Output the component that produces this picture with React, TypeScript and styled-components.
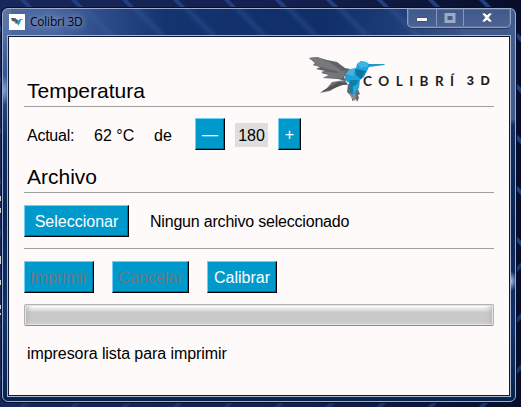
import React from "react";
import styled, { createGlobalStyle, css } from "styled-components";

const GlobalStyle = createGlobalStyle`
  * { box-sizing: border-box; }
  body { margin: 0; overflow: hidden; background: #0a1437; }
`;

const Desktop = styled.div`
  position: relative;
  width: 521px;
  height: 407px;
  padding: 8px 5px 5px 2px;
  background:
    repeating-linear-gradient(45deg, transparent 0 17px, #213f80 18px 21px, transparent 22px 36.06px) 0 0 / 521px 260px no-repeat,
    repeating-linear-gradient(135deg, transparent 0 9px, #1a3269 10px 13px, transparent 14px 36.06px) 0 260px / 521px 147px no-repeat,
    linear-gradient(90deg, #18275c, #131f4e 60%, #070d2a);
`;

const IconLabels = styled.svg`
  position: absolute;
  left: 0;
  top: 190px;
`;

const Window = styled.div`
  display: flex;
  flex-direction: column;
  width: 514px;
  height: 394px;
  padding: 0 5px 5px 4px;
  border: 1px solid #9fadc7;
  border-radius: 6px;
  box-shadow: 0 0 0 1px #060e2a;
  background:
    radial-gradient(ellipse 6px 15px at 1px 81px, #87a4d9, transparent) 0 0 / 8px 100% no-repeat,
    linear-gradient(180deg, #5a74a8 0 20px, #40609b 45px, transparent 130px) 0 0 / 8px 100% no-repeat,
    radial-gradient(ellipse 6px 10px at 4px 272px, #aac2f1, transparent) 100% 0 / 8px 100% no-repeat,
    linear-gradient(180deg, #435a8c 0 110px, transparent 116px) 100% 0 / 7px 100% no-repeat,
    linear-gradient(90deg, #4c68a0 0%, #4a669f 10%, #304f8c 18%, #143470 32%, #102e68 62%, #1b3c77 76%, #42598c 93%) 0 0 / 100% 28px no-repeat,
    linear-gradient(180deg, #173c7b, #0a2453 55%, #10316b 80%, #09234f);
`;

const TitleBar = styled.header`
  display: flex;
  flex: 0 0 27px;
  align-items: flex-start;
  margin: 0 -5px 0 -4px;
  padding: 0 4px 0 6px;
  background: repeating-linear-gradient(45deg, transparent 0, rgba(61, 105, 174, 0.26) 5px, transparent 10px 36.06px);
`;

const AppIcon = styled.svg`
  flex: none;
  width: 16px;
  height: 16px;
  margin-top: 5px;
  background: #fff;
`;

const Title = styled.span`
  margin: 4px auto 0 0;
  padding: 0 6px 0 5px;
  font: 12px/18px "Open Sans", sans-serif;
  letter-spacing: -0.23px;
  color: #02050d;
  text-shadow: 0 0 7px #9fb0d2, 0 0 9px #8fa3ca;
`;

const Controls = styled.div`
  display: flex;
  width: 104px;
  height: 19px;
  border: 1px solid #8d9ebf;
  border-top: 0;
  border-radius: 0 0 5px 5px;
  box-shadow: inset 0 0 0 1px #5b719e, 0 1px 0 #26365e;
  background: linear-gradient(#40588b, #4a6394);
`;

const Control = styled.span<{ $width: number }>`
  display: flex;
  align-items: center;
  justify-content: center;
  width: ${(p) => p.$width}px;
  height: 17px;
  & + & { border-left: 1px solid #8797b7; }
`;

const Client = styled.main`
  flex: 1;
  width: 502px;
  margin-left: 1px;
  padding: 0 15px;
  border: 1px solid #0b1831;
  outline: 1px solid #aab8ce;
  background: #fefaf9;
  font-family: "Liberation Sans", Arial, sans-serif;
  font-size: 16px;
  line-height: 20px;
  color: #000;
`;

const Section = styled.section<{ $height: number }>`
  display: flex;
  align-items: flex-end;
  justify-content: space-between;
  height: ${(p) => p.$height}px;
  border-bottom: 1px solid #a0a0a0;
`;

const Heading = styled.h2`
  margin: 0 0 2px 3px;
  font-size: 21px;
  font-weight: 400;
  line-height: 26px;
`;

const Brand = styled.div`
  display: flex;
  height: 50px;
  margin-right: 4px;
`;

const Bird = styled.svg`
  position: relative;
  z-index: 1;
  width: 76px;
  height: 48px;
`;

const Wordmark = styled.div`
  display: flex;
  justify-content: space-between;
  width: 127px;
  margin: 15px 0 0 -22px;
  font: 700 13.5px/20px Lato, sans-serif;
  color: #1d1d20;
`;

const Numeral = styled.b`
  font: 700 13px/20px "Liberation Sans", Arial, sans-serif;
`;

const Row = styled.div<{ $top: number }>`
  display: flex;
  align-items: center;
  height: 32px;
  margin-top: ${(p) => p.$top}px;
`;

const Label = styled.span<{ $width?: number; $left?: number; $spacing?: number; $drop?: number }>`
  margin-left: ${(p) => p.$left ?? 0}px;
  padding-top: ${(p) => p.$drop ?? 2}px;
  width: ${(p) => (p.$width ? `${p.$width}px` : "auto")};
  letter-spacing: ${(p) => p.$spacing ?? 0}px;
  white-space: nowrap;
`;

const Button = styled.button<{ $width: number; $gap?: number }>`
  flex: none;
  width: ${(p) => p.$width}px;
  height: 32px;
  margin: 0 ${(p) => p.$gap ?? 0}px 0 0;
  padding: 1px 0 0;
  border: 1px solid #000;
  border-top-color: #71cdf5;
  border-left-color: #71cdf5;
  box-shadow: inset -1px -1px 0 #006d93;
  background: #0099cc;
  color: #fff;
  font: 16px/20px "Liberation Sans", Arial, sans-serif;
  ${(p) => p.disabled && css`color: #6d7880;`}
`;

const Target = styled.output`
  width: 33px;
  height: 24px;
  margin: 2px 10px 0 0;
  background: #dedede;
  line-height: 25px;
  text-align: center;
`;

const Progress = styled.div`
  height: 22px;
  margin-top: 11px;
  border: 1px solid #b2b2b2;
  border-bottom-color: #8c8c8c;
  border-radius: 2px;
  box-shadow: inset 0 0 0 1px #e4e4e4, inset 8px 0 6px -6px #b4b4b4, inset -8px 0 6px -6px #b4b4b4;
  background: linear-gradient(#fff 0 1px, #ececec 3px, #d8d8d8 6px, #c9c9c9 7px, #cacaca 17px, #d8d8d8);
`;

function HummingbirdShapes() {
  return (
    <>
      <path d="M0 2 L8 1 18 4 28 6 36 12 41 13 35 21 37 25 29 23 14 22 20 19 12 17 16 15 7 13 11 11 4 9 6 7Z" fill="#606265" />
      <path d="M0 2 8 1 22 7 35 17 27 15 4 9 7 7Z" fill="#77797b" />
      <path d="M12 15 28 17 37 14 34 22 14 22 20 19Z" fill="#747679" />
      <path d="M36 24 23 26 18 32 11 37 21 35 31 29 39 29Z" fill="#707277" />
      <path d="M29 26 12 36 23 33 39 27Z" fill="#505258" />
      <path d="M39 28 38 36 43 41 43 45 47 43 48 46 50 42 49 39 51 38 48 31Z" fill="#65686d" />
      <path d="M40 37 47 38 46 45 43 43Z" fill="#8a8c91" />
      <path d="M36 18 41 13 47 12 48 8 52 5 57 6 60 8 75 8 76 9 60 11 57 17 55 21 51 24 50 32 44 40 40 33 40 27 36 24Z" fill="#20a1db" />
      <path d="M46 13 57 15 52 23 47 19Z" fill="#08779d" />
      <path d="M41 24 50 24 45 32 43 39 40 33Z" fill="#147fa4" />
      <path d="M44 30 50 29 44 40Z" fill="#2ca6d5" />
      <path d="M48 8 52 5 57 6 60 10 52 12Z" fill="#39b5e7" />
      <path d="M37 18 41 13 46 13 44 20Z" fill="#4ab1d9" />
      <path d="M60 8.2 75 8.4 59 10Z" fill="#2e91ba" />
    </>
  );
}

export default function App() {
  return (
    <>
      <GlobalStyle />
      <Desktop>
        <IconLabels width="2" height="130" viewBox="0 0 2 130" aria-hidden="true">
          <path d="M0 6h1v5H0zM0 18h1v5H0zM0 66h1v8H0zM0 90h1v5H0zM0 115h1v4H0zM0 123h1v2H0z" fill="#cdd1d9" />
        </IconLabels>
        <Window>
          <TitleBar>
            <AppIcon viewBox="0 0 16 16">
              <path d="M2 4 6 4 10 7 10 10 5 9 7 8 3 7Z" fill="#555c60" />
              <path d="M8 8 11 5 15 5 12 6 11 9 9 12Z" fill="#169dca" />
            </AppIcon>
            <Title>Colibri 3D</Title>
            <Controls>
              <Control $width={28}>
                <svg width="12" height="9" viewBox="0 0 12 9"><path d="M.5 4.5h11v4H.5z" fill="#f7f7f7" stroke="#485369" /></svg>
              </Control>
              <Control $width={27}>
                <svg width="12" height="10" viewBox="0 0 12 10"><path d="M2 1.5h8v7H2z" fill="none" stroke="#9daac4" strokeWidth="3" /><path d="M4 4h4v2H4z" fill="#445a89" /></svg>
              </Control>
              <Control $width={47}>
                <svg width="12" height="11" viewBox="0 0 12 11"><path d="M1 1h3l2 2 2-2h3v1L8 5.5 11 9v1H8L6 8l-2 2H1V9l3-3.5L1 2z" fill="#fff" stroke="#4d5870" strokeWidth=".8" /></svg>
              </Control>
            </Controls>
          </TitleBar>
          <Client>
            <Section $height={70}>
              <Heading>Temperatura</Heading>
              <Brand>
                <Bird viewBox="0 0 76 48"><HummingbirdShapes /></Bird>
                <Wordmark>
                  <span>C</span><span>O</span><span>L</span><span>I</span><span>B</span><span>R</span><span>Í</span><span /><Numeral>3</Numeral><Numeral>D</Numeral>
                </Wordmark>
              </Brand>
            </Section>
            <Row $top={11}>
              <Label $left={3} $width={67} $spacing={-0.25} $drop={4}>Actual:</Label>
              <Label $width={60} $drop={4}>62 °C</Label>
              <Label $width={41} $drop={4}>de</Label>
              <Button $width={30} $gap={10}>—</Button>
              <Target>180</Target>
              <Button $width={23}>+</Button>
            </Row>
            <Section $height={43}><Heading>Archivo</Heading></Section>
            <Row $top={12}>
              <Button $width={105}>Seleccionar</Button>
              <Label $left={21} $spacing={-0.2}>Ningun archivo seleccionado</Label>
            </Row>
            <Section $height={12} />
            <Row $top={12}>
              <Button $width={70} $gap={18} disabled>Imprimir</Button>
              <Button $width={77} $gap={18} disabled>Cancelar</Button>
              <Button $width={70}>Calibrar</Button>
            </Row>
            <Progress role="progressbar" aria-valuenow={0} />
            <Row $top={11}><Label $left={3} $spacing={-0.07}>impresora lista para imprimir</Label></Row>
          </Client>
        </Window>
      </Desktop>
    </>
  );
}
